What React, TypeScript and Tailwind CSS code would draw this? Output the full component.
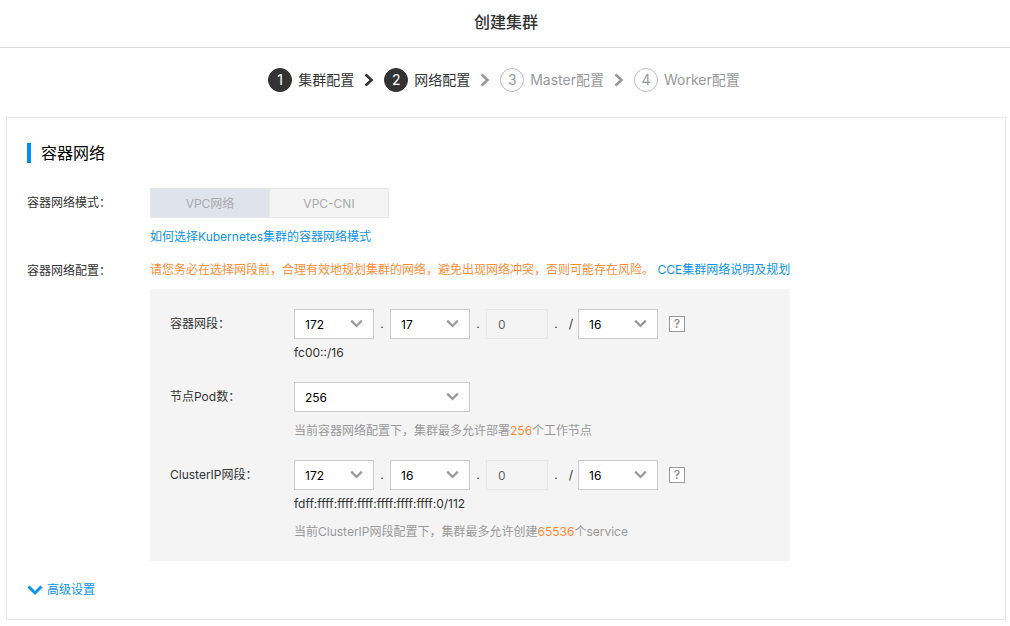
import { Fragment } from "react";
import clsx from "clsx";

const steps = [
  { label: "集群配置", done: true, arrow: "text-[#333]" },
  { label: "网络配置", done: true, arrow: "text-[#999]" },
  { label: "Master配置", done: false, arrow: "text-[#999]" },
  { label: "Worker配置", done: false, arrow: "" },
];

const Chevron = ({ className, width = 3 }: { className?: string; width?: number }) => (
  <svg viewBox="0 0 16 16" fill="none" stroke="currentColor" strokeWidth={width} className={className} aria-hidden="true">
    <path d="M1.5 4.5 8 11l6.5-6.5" />
  </svg>
);

const Steps = () => (
  <ol className="flex items-center justify-center pt-5 pr-0.5 text-sm leading-6">
    {steps.map((step, i) => (
      <Fragment key={step.label}>
        <li className={clsx("flex items-center gap-1.5", step.done ? "text-[#333]" : "text-[#999]")}>
          <span
            className={clsx(
              "flex size-6 items-center justify-center rounded-full border",
              step.done ? "border-[#333] bg-[#333] text-white" : "border-[#bbb]"
            )}
          >
            {i + 1}
          </span>
          {step.label}
        </li>
        {step.arrow && (
          <li aria-hidden="true" className={clsx("mx-2 flex w-3.5 justify-center", step.arrow)}>
            <svg viewBox="0 0 10 14" fill="none" stroke="currentColor" strokeWidth="2.6" className="h-3.5 w-2.5">
              <path d="M1.5 1.5 7.5 7l-6 5.5" />
            </svg>
          </li>
        )}
      </Fragment>
    ))}
  </ol>
);

const Select = ({ id, value, label, wide }: { id?: string; value: string; label?: string; wide?: boolean }) => (
  <div className={clsx("relative h-[30px]", wide ? "w-44" : "w-20")}>
    <select
      id={id}
      aria-label={label}
      defaultValue={value}
      className="h-full w-full appearance-none border border-[#ccc] bg-white pt-px pl-2.5 text-xs text-black outline-none"
    >
      <option>{value}</option>
    </select>
    <Chevron width={2.8} className="pointer-events-none absolute top-2 right-[11px] size-[13px] text-[#999]" />
  </div>
);

const CidrFields = ({ id, name, second }: { id: string; name: string; second: string }) => (
  <div className="flex items-center">
    <Select id={id} value="172" />
    <span className="w-4 text-center">.</span>
    <Select value={second} label={`${name} 2`} />
    <span className="w-4 text-center">.</span>
    <input
      disabled
      defaultValue="0"
      aria-label={`${name} 3`}
      className="h-[30px] w-[62px] border border-[#e8e8e8] bg-transparent px-[11px] text-xs text-[#666]"
    />
    <span className="w-4 text-center">.</span>
    <span className="w-3.5 text-center">/</span>
    <Select value="16" label={`${name}掩码`} />
    <button
      type="button"
      aria-label="帮助"
      className="ml-[11px] flex size-4 items-center justify-center border border-[#999] bg-white text-xs leading-none font-medium text-[#888]"
    >
      ?
    </button>
  </div>
);

export default function App() {
  return (
    <div className="bg-white pb-1.5 font-['Inter','Noto_Sans_CJK_SC',sans-serif] text-xs leading-5 text-[#333]" lang="zh-CN">
      <header className="border-b border-[#ddd] pt-2.5 pb-[13px] pl-0.5 text-center">
        <h1 className="text-base leading-6 font-medium">创建集群</h1>
      </header>

      <Steps />

      <main className="mt-[25px] mr-1 ml-1.5 border border-[#e8e8e8] px-5 pt-[25px] pb-[19px]">
        <h2 className="border-l-4 border-[#0090ec] pl-2.5 text-base leading-5 text-black">容器网络</h2>

        <div className="mt-[25px] flex">
          <span id="mode" className="w-[123px] shrink-0 pt-[5px]">容器网络模式：</span>
          <div>
            <div role="group" aria-labelledby="mode" className="flex h-[30px] w-[239px] border border-[#e8e8e8] text-[#aaa]">
              <button type="button" disabled className="flex-1 border-r border-[#e8e8e8] bg-[#dfe4ec] pt-0.5">VPC网络</button>
              <button type="button" disabled className="flex-1 bg-[#f4f4f4] pt-0.5">VPC-CNI</button>
            </div>
            <a href="#mode-help" className="mt-[9px] block text-[#0d94ea]">如何选择Kubernetes集群的容器网络模式</a>
          </div>
        </div>

        <div className="mt-[13px] flex">
          <span className="w-[123px] shrink-0 pt-px">容器网络配置：</span>
          <div>
            <p className="whitespace-nowrap text-[#ff8d36]">
              请您务必在选择网段前，合理有效地规划集群的网络，避免出现网络冲突，否则可能存在风险。{" "}
              <a href="#plan" className="text-[#0d94ea]">CCE集群网络说明及规划</a>
            </p>

            <div className="mt-[9px] w-[640px] bg-[#f4f4f4] px-5 pt-5 pb-[19px]">
              <div className="flex">
                <label htmlFor="container" className="w-[124px] pt-[5px]">容器网段：</label>
                <div>
                  <CidrFields id="container" name="容器网段" second="17" />
                  <p className="mt-1">fc00::/16</p>
                </div>
              </div>

              <div className="mt-[19px] flex">
                <label htmlFor="pods" className="w-[124px] pt-[5px]">节点Pod数：</label>
                <div>
                  <Select id="pods" value="256" wide />
                  <p className="mt-[9px] text-[#999]">
                    当前容器网络配置下，集群最多允许部署<span className="text-[#ff8d36]">256</span>个工作节点
                  </p>
                </div>
              </div>

              <div className="mt-[19px] flex">
                <label htmlFor="cluster" className="w-[124px] pt-[5px]">ClusterIP网段：</label>
                <div>
                  <CidrFields id="cluster" name="ClusterIP网段" second="16" />
                  <p className="mt-1">fdff:ffff:ffff:ffff:ffff:ffff:ffff:0/112</p>
                  <p className="mt-2 text-[#999]">
                    当前ClusterIP网段配置下，集群最多允许创建<span className="text-[#ff8d36]">65536</span>个service
                  </p>
                </div>
              </div>
            </div>
          </div>
        </div>

        <button type="button" className="mt-[19px] flex items-center gap-1 text-[#0d94ea]">
          <Chevron className="size-4" />
          高级设置
        </button>
      </main>
    </div>
  );
}
